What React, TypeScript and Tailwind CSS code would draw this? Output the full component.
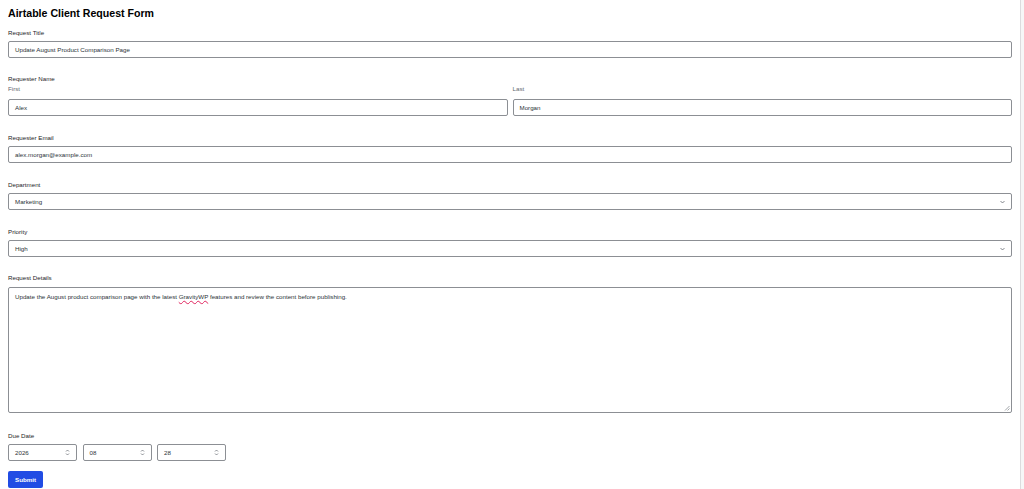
import { ReactNode } from "react";

const fieldBox =
  "h-[17px] w-full rounded-[2px] border border-[#8c8f94] bg-white px-[6px] flex items-center text-[6.2px] text-[#2c3338]";

function Label({ children }: { children: ReactNode }) {
  return <div className="h-[8px] leading-[8px] text-[6.2px] text-[#1d2327] mb-[4.5px]">{children}</div>;
}

function SubLabel({ children }: { children: ReactNode }) {
  return <div className="h-[8px] leading-[8px] text-[6.2px] text-[#646970] mb-[6px]">{children}</div>;
}

function ChevronDown() {
  return (
    <svg width="5" height="4" viewBox="0 0 10 8" className="shrink-0">
      <path d="M1 2 L5 6 L9 2" fill="none" stroke="#50575e" strokeWidth="1.4" />
    </svg>
  );
}

function UpDown() {
  return (
    <svg width="5" height="7" viewBox="0 0 10 14" className="shrink-0">
      <path d="M2 5 L5 2 L8 5 M2 9 L5 12 L8 9" fill="none" stroke="#50575e" strokeWidth="1.3" />
    </svg>
  );
}

function SelectBox({ value, spinner }: { value: string; spinner?: boolean }) {
  return (
    <div className={`${fieldBox} justify-between`}>
      <span>{value}</span>
      {spinner ? <UpDown /> : <ChevronDown />}
    </div>
  );
}

export default function App() {
  return (
    <div className="flex min-h-[489px] bg-white font-['Liberation_Sans',Arial,sans-serif]">
      <div className="flex-1 px-2 pt-[6px]">
        <h1 className="text-[10.6px] leading-[14px] font-bold text-black mb-[8.5px]">Airtable Client Request Form</h1>

        {/* Request title */}
        <div className="mb-[16.5px]">
          <Label>Request Title</Label>
          <div className={fieldBox}>Update August Product Comparison Page</div>
        </div>

        {/* Requester name */}
        <div className="mb-[17.5px]">
          <div className="h-[8px] leading-[8px] text-[6.2px] text-[#1d2327] mb-[2.5px]">Requester Name</div>
          <div className="grid grid-cols-2 gap-[5px]">
            <div>
              <SubLabel>First</SubLabel>
              <div className={fieldBox}>Alex</div>
            </div>
            <div>
              <SubLabel>Last</SubLabel>
              <div className={fieldBox}>Morgan</div>
            </div>
          </div>
        </div>

        <div className="mb-[17.5px]">
          <Label>Requester Email</Label>
          <div className={fieldBox}>alex.morgan@example.com</div>
        </div>

        <div className="mb-[17.5px]">
          <Label>Department</Label>
          <SelectBox value="Marketing" />
        </div>

        <div className="mb-[17px]">
          <Label>Priority</Label>
          <SelectBox value="High" />
        </div>

        {/* Request details */}
        <div className="mb-[19px]">
          <Label>Request Details</Label>
          <div className="relative h-[126px] w-full rounded-[2px] border border-[#8c8f94] bg-white px-[6px] pt-[5px] text-[6.2px] leading-[8px] text-[#2c3338]">
            Update the August product comparison page with the latest{" "}
            <span className="underline decoration-wavy decoration-[#e0245e] decoration-[1px] underline-offset-[1px] [text-decoration-skip-ink:none]">GravityWP</span>{" "}
            features and review the content before publishing.
            <svg width="6" height="6" viewBox="0 0 6 6" className="absolute right-[1px] bottom-[1px]">
              <path d="M5.5 1 L1 5.5 M5.5 3.5 L3.5 5.5" stroke="#8c8f94" strokeWidth="0.8" />
            </svg>
          </div>
        </div>

        {/* Due date */}
        <div className="mb-[10px]">
          <Label>Due Date</Label>
          <div className="flex gap-[5.5px]">
            <div className="w-[69px]">
              <SelectBox value="2026" spinner />
            </div>
            <div className="w-[69px]">
              <SelectBox value="08" spinner />
            </div>
            <div className="w-[69px]">
              <SelectBox value="28" spinner />
            </div>
          </div>
        </div>

        <button className="block h-[17px] w-[35px] rounded-[2px] bg-[#214ce4] text-[6.2px] font-bold text-white">Submit</button>
      </div>
      <div className="w-[4px] border-l border-[#dcdcde] bg-[#f6f7f7]" />
    </div>
  );
}
